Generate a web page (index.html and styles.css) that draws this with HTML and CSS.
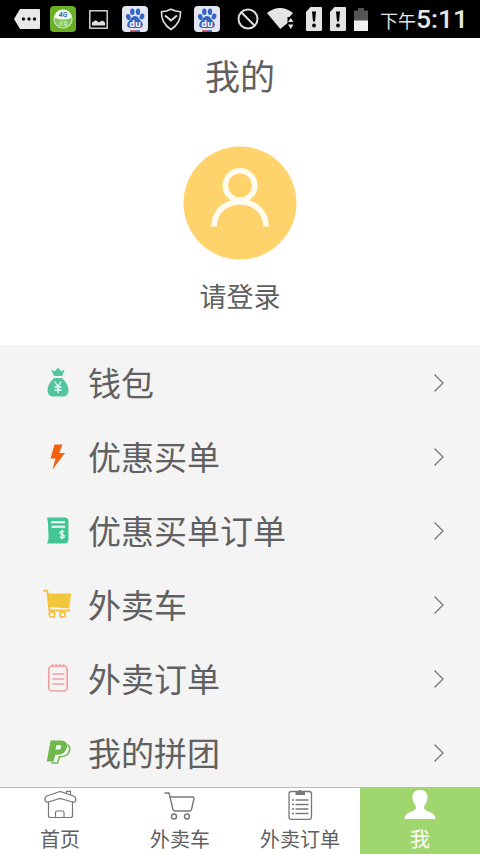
FILE: index.html
```html
<!DOCTYPE html>
<html lang="zh-CN">
<head>
<meta charset="utf-8">
<meta name="viewport" content="width=device-width, initial-scale=1">
<title>我的</title>
<link rel="stylesheet" href="styles.css">
</head>
<body>
<svg width="0" height="0" class="defs">
  <symbol id="chevron" viewBox="0 0 12 20"><path d="M1.500 1.500 10 10l-8.500 8.500" fill="none" stroke="#777" stroke-width="1.300"/></symbol>
  <symbol id="baidu" viewBox="0 0 26 26">
    <rect width="26" height="26" rx="4" fill="#e4e6f2"/>
    <g fill="#3464c4"><ellipse cx="6.300" cy="11" rx="2.300" ry="3" transform="rotate(-15 6.300 11)"/><ellipse cx="10.300" cy="5.700" rx="2.200" ry="3.200"/><ellipse cx="16" cy="5.700" rx="2.200" ry="3.200"/><ellipse cx="20" cy="10.500" rx="2.300" ry="3" transform="rotate(15 20 10.500)"/><path d="M13 10c3 0 4 3 6 5 3 3 2 7-1.500 7h-9C5 22 4 18 7 15c2-2 3-5 6-5Z"/></g>
    <path d="M8 24.200h5V26H8z" fill="#c84a5a"/><path d="M13 24.200h5V26h-5z" fill="#4968b8"/>
    <text x="13" y="20.800" text-anchor="middle" class="du">du</text>
  </symbol>
  <symbol id="sim" viewBox="0 0 16 24"><path d="M4.500 0H15q1 0 1 1v22q0 1-1 1H1q-1 0-1-1V5z" fill="#e4e4e4"/><path d="M6 4.500h4l-1 10H7z" fill="#000"/><circle cx="8" cy="18.500" r="1.900" fill="#000"/></symbol>
</svg>
<div class="app">
  <div class="status">
    <svg class="s-msg" width="26" height="20" viewBox="0 0 26 20"><path d="M6 0h19q1 0 1 1v18q0 1-1 1H6L0 10z" fill="#e8e8e8"/><g fill="#111"><circle cx="9.500" cy="10" r="1.700"/><circle cx="15" cy="10" r="1.700"/><circle cx="20.500" cy="10" r="1.700"/></g></svg>
    <svg class="s-4g" width="26" height="26" viewBox="0 0 26 26"><rect width="26" height="26" rx="4" fill="#6caf26"/><circle cx="13" cy="13" r="9" fill="#7fc45a" stroke="#c8e7b4" stroke-width="1.200"/><path d="M4.500 12a8.500 8.500 0 0 1 17 0q-8 3-17 0Z" fill="#f2f8ee"/><text x="13" y="11.300" text-anchor="middle" class="g4">4G</text><text x="13" y="19" text-anchor="middle" class="g4s">流量</text></svg>
    <svg class="s-pic" width="19" height="19" viewBox="0 0 19 19"><rect x=".8" y=".8" width="17.400" height="17.400" fill="none" stroke="#dedede" stroke-width="1.400"/><path d="M3 15.500v-3l3.500-2.300 3.500 2 3.500-1.700 2.500 2v3z" fill="#dedede"/></svg>
    <svg class="s-du" width="26" height="26"><use href="#baidu"/></svg>
    <svg class="s-shield" width="22" height="23" viewBox="0 0 22 23"><path d="M11 1.200q4.500 2.300 9.500 2.500.6 11.300-9.500 17.800Q.9 15 1.500 3.700 6.500 3.500 11 1.200Z" fill="none" stroke="#dedede" stroke-width="1.600"/><path d="m5 7.500 6 5 6-5" fill="none" stroke="#dedede" stroke-width="2"/></svg>
    <svg class="s-du2" width="26" height="26"><use href="#baidu"/></svg>
    <svg class="s-no" width="22" height="22" viewBox="0 0 22 22"><circle cx="11" cy="11" r="9.500" fill="none" stroke="#dedede" stroke-width="2"/><path d="m4.300 4.300 13.400 13.400" stroke="#dedede" stroke-width="2"/></svg>
    <svg class="s-wifi" width="27" height="22" viewBox="0 0 27 22"><path d="M0 5q13-10 26 0l-3.500 4h-2v6L13.300 21z" fill="#e4e4e4"/><path d="M21 14h5.500l-2.700-4zM21 16.500h5.500l-2.700 4.500z" fill="#e4e4e4"/></svg>
    <svg class="s-sim" width="16" height="24"><use href="#sim"/></svg>
    <svg class="s-sim2" width="16" height="24"><use href="#sim"/></svg>
    <svg class="s-bat" width="14" height="23" viewBox="0 0 14 23"><path d="M0 2.500h4V0h6v2.500h4V13H0z" fill="#555"/><path d="M0 12.500h14V23H0z" fill="#f0f0f0"/></svg>
    <span class="ampm">下午</span><span class="time">5:11</span>
  </div>
  <header class="profile">
    <h1>我的</h1>
    <svg class="avatar" width="114" height="114" viewBox="0 0 114 114"><circle cx="57" cy="57" r="56.500" fill="#ffd36c"/><g fill="none" stroke="#fffdf2" stroke-width="5.600"><circle cx="57" cy="39.500" r="14.700"/><path d="M31 80.500C31 65 43 56 57 56S83 65 83 80.500"/></g></svg>
    <div class="login">请登录</div>
  </header>
  <main class="menu">
    <div class="row"><svg class="ico" viewBox="0 0 32 32"><path d="M12 9 9.300 2.700l3.500 1.600L16 .8l3.200 3.500 3.500-1.600L20 9z" fill="#53c3a0"/><path d="M12 11h8q6.500 6 6.500 12.500 0 6-6.500 6h-8q-6.500 0-6.500-6Q5.500 17 12 11Z" fill="#53c3a0"/><path d="m12.800 14.500 3.200 5 3.200-5M16 19.500V26M12.500 20h7M12.500 23h7" fill="none" stroke="#e8fff7" stroke-width="1.300"/></svg><span>钱包</span><svg class="chev"><use href="#chevron"/></svg></div>
    <div class="row"><svg class="ico" viewBox="0 0 32 32"><path d="M12.500 3.500h8l-3.200 8.500H23L10.500 28.500l3-11H8.500z" fill="#f0620f"/></svg><span>优惠买单</span><svg class="chev"><use href="#chevron"/></svg></div>
    <div class="row"><svg class="ico" viewBox="0 0 32 32"><path d="M5 2.500h17.500q4 0 4 4V24q0 4.500-4 4.500H5q2-3 1.500-7L6 8z" fill="#42c595"/><path d="M9 7.200h14M9.500 11.700H23" stroke="#f2fff9" stroke-width="2"/><path d="M22 17.200c-.8-1.500-4.200-1-4 .7.200 1.800 4.200 1 4.300 3.200.1 2-3.700 2.300-4.600.3M20.100 14.500v9.700" fill="none" stroke="#f2fff9" stroke-width="1.300"/></svg><span>优惠买单订单</span><svg class="chev"><use href="#chevron"/></svg></div>
    <div class="row"><svg class="ico" viewBox="0 0 32 32"><path d="M6 4.500h23.300L27 19.500 8 18z" fill="#f3c63c"/><path d="M1.300 1.700h4L7.500 21.500H28" fill="none" stroke="#f3bf3c" stroke-width="1.900"/><circle cx="10" cy="25.500" r="2.700" fill="none" stroke="#f3bf3c" stroke-width="1.700"/><circle cx="20.500" cy="25.500" r="2.700" fill="none" stroke="#f3bf3c" stroke-width="1.700"/></svg><span>外卖车</span><svg class="chev"><use href="#chevron"/></svg></div>
    <div class="row"><svg class="ico" viewBox="0 0 32 32"><g fill="none" stroke="#f0a0a0"><rect x="6.800" y="3" width="18.400" height="25" rx="3.500" stroke-width="1.700"/><path d="M10.500 11h12M10.500 16h12M10.500 21h12" stroke-width="1.500"/><path d="M10.500 1v3.300M14.200 1v3.300M17.900 1v3.300M21.600 1v3.300" stroke-width="1.500"/></g></svg><span>外卖订单</span><svg class="chev"><use href="#chevron"/></svg></div>
    <div class="row"><svg class="ico" viewBox="0 0 32 32"><path d="M25.500 7.500q4 3.500 1 8.500-2 3.800-9 3.700L15.500 26H9.500" fill="none" stroke="#70b84b" stroke-width="1.600"/><path d="M8.500 3.500H19q7 0 6 6.500Q23.500 17.700 15.500 17.700h-2L11.500 24.500H4.800z" fill="#70b84b"/><path d="M14.500 8h3q2.200 0 1.800 2-.5 2.500-2.800 2.500h-3z" fill="#f5fff0"/></svg><span>我的拼团</span><svg class="chev"><use href="#chevron"/></svg></div>
  </main>
  <nav class="tabs">
    <div class="tab"><svg width="34" height="32" viewBox="0 0 34 32"><g fill="none" stroke="#777" stroke-width="1.200"><path d="M5.500 13.500v14q0 2 2 2h20q2 0 2-2v-14"/><path d="M17 3.500 4 8Q1.500 9 2 12.200q.5 2.600 3.500 1.800L17 10.500 29.500 14q3 .8 3.300-1.800Q33 9 30.500 8Z"/><path d="M23.500 5.500V3.300h4V7M12.500 29.500v-5q0-1.500 1.500-1.500h5.500q1.500 0 1.500 1.500v5"/></g></svg><span>首页</span></div>
    <div class="tab"><svg width="34" height="32" viewBox="0 0 34 32"><g fill="none" stroke="#777" stroke-width="1.400"><path d="M1.500 5H6l4 16.500q.4 1.500 2 1.500h14.500q1.500 0 2-1.500L31 10.500q.3-1.500-1.300-1.500H7"/><circle cx="11" cy="28.500" r="2.500"/><circle cx="24" cy="28.500" r="2.500"/></g></svg><span>外卖车</span></div>
    <div class="tab"><svg width="34" height="32" viewBox="0 0 34 32"><rect x="6" y="3.500" width="22.500" height="28" rx="2.500" fill="none" stroke="#777" stroke-width="1.300"/><path d="M12.500 7V4H15q.3-2 2.200-2t2.200 2H22v3z" fill="#777"/><path d="M9 12h2M9 16.500h2M9 21h2M9 25.500h2M12.500 12h13M12.500 16.500h13M12.500 21h13M12.500 25.500h13" stroke="#777" stroke-width="1.300"/></svg><span>外卖订单</span></div>
    <div class="tab active"><svg width="34" height="32" viewBox="0 0 34 32"><path d="M17 2c5 0 8 3.500 7.500 8-.2 3.500-1.500 5.500-3.200 7.500v3.500c2 3 11 2.500 11.200 10h-31c.2-7.500 9.200-7 11.200-10v-3.500C11 15.500 9.700 13.500 9.500 10 9 5.500 12 2 17 2Z" fill="#fff"/></svg><span>我</span></div>
  </nav>
</div>
</body>
</html>
```
FILE: styles.css
```css
* { box-sizing: border-box; }
body {
  margin: 0;
  background: #fff;
  color: #606060;
  font-family: Roboto, "Noto Sans CJK SC", sans-serif;
}
svg { display: block; flex: none; }
.defs { display: none; }
.app {
  display: flex;
  flex-direction: column;
  width: 480px;
  height: 854px;
  overflow: hidden;
}
.status {
  display: flex;
  flex: none;
  align-items: center;
  height: 38px;
  padding-left: 14px;
  background: #000;
  color: #e6e6e6;
  white-space: nowrap;
}
.s-4g { margin-left: 10px; }
.s-pic { margin-left: 13px; }
.s-du { margin-left: 14px; }
.s-shield { margin-left: 12px; }
.s-du2 { margin-left: 12px; }
.s-no { margin-left: 17px; }
.s-wifi { margin-left: 8px; }
.s-sim { margin-left: 12px; }
.s-sim2 { margin-left: 8px; }
.s-bat { margin-left: 8px; }
.ampm { margin-left: 12px; font-size: 18px; line-height: 34px; padding-top: 6px; }
.time { font-size: 26.5px; font-weight: 500; line-height: 38px; }
.du { font: bold 9px "Open Sans", sans-serif; fill: #fff; }
.g4 { font: italic bold 7px Roboto, sans-serif; fill: #306ab0; }
.g4s { font: 5px "Noto Sans CJK SC", sans-serif; fill: #d9f0c8; }

.profile {
  display: flex;
  flex: none;
  flex-direction: column;
  align-items: center;
  height: 307px;
}
h1 {
  margin: 0;
  padding-top: 3px;
  height: 76px;
  font-size: 35px;
  font-weight: 400;
  line-height: 76px;
}
.avatar { margin-top: 32px; }
.login { margin-top: 18px; font-size: 27px; line-height: 40px; }

.menu {
  flex: 1;
  min-height: 0;
  overflow: hidden;
  background: #f4f4f4;
}
.row {
  display: flex;
  align-items: center;
  height: 74px;
  padding: 0 35px 0 42px;
  font-size: 33px;
}
.ico { width: 32px; height: 32px; margin: 2px 14px 0 0; }
.row:first-child .ico { margin-top: 1px; }
.row span { flex: 1; padding-top: 5px; line-height: 74px; }
.chev { width: 12px; height: 20px; margin-top: 1px; }

.tabs {
  display: flex;
  flex: none;
  height: 67px;
  border-top: 1px solid #bbb;
}
.tab {
  display: flex;
  flex: 1;
  flex-direction: column;
  align-items: center;
  font-size: 20px;
  line-height: 34px;
}
.tab span { padding-top: 3px; }
.active { background: #a0d66e; color: #fff; }
```
